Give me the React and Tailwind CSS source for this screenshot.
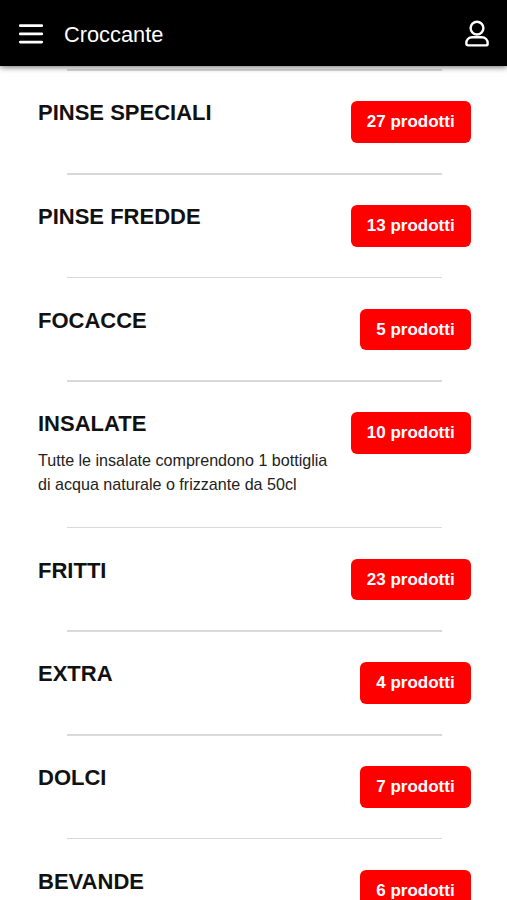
import React from "react";
import clsx from "clsx";

const categories = [
  { name: "PINSE SPECIALI", count: 27 },
  { name: "PINSE FREDDE", count: 13 },
  { name: "FOCACCE", count: 5 },
  {
    name: "INSALATE",
    count: 10,
    description:
      "Tutte le insalate comprendono 1 bottiglia di acqua naturale o frizzante da 50cl",
  },
  { name: "FRITTI", count: 23 },
  { name: "EXTRA", count: 4 },
  { name: "DOLCI", count: 7 },
  { name: "BEVANDE", count: 6 },
];

function MenuIcon() {
  return (
    <svg width="26" height="22" viewBox="0 0 26 22" fill="none">
      <path
        d="M2.3 1.7h21.4M2.3 9.9h21.4M2.3 18.1h21.4"
        stroke="#fff"
        strokeWidth="2.8"
        strokeLinecap="round"
      />
    </svg>
  );
}

function UserIcon() {
  return (
    <svg width="26" height="30" viewBox="0 0 26 30" fill="none">
      <g stroke="#fff" strokeWidth="2.4" strokeLinejoin="round">
        <circle cx="13" cy="8.1" r="6.4" />
        <path d="M8.2 17.2h9.6c3.6 0 5.9 2.6 5.9 6.2 0 1.4-.7 2-2 2H4.3c-1.3 0-2-.6-2-2 0-3.6 2.3-6.2 5.9-6.2z" />
      </g>
    </svg>
  );
}

function Category({ name, count, description }) {
  return (
    <section
      className={clsx(
        "flex flex-col shrink-0",
        description ? "h-[146.2px]" : "h-[103.7px]"
      )}
    >
      <div className="ml-[67px] mr-[65px] h-[1.5px] shrink-0 bg-[#d9d9d9]" />
      <div className="flex items-start justify-between pl-[38px] pr-9 pt-[30.5px]">
        <div className="w-[300px]">
          <h2 className="text-[22px] leading-[23.2px] font-bold text-[#111]">
            {name}
          </h2>
          {description && (
            <p className="mt-[13.6px] text-[16.1px] leading-[23.5px] text-[#222]">
              {description}
            </p>
          )}
        </div>
        <button
          type="button"
          className="h-[41.5px] shrink-0 whitespace-nowrap rounded-[6px] bg-[#ff0000] pl-[16px] pr-[16.4px] text-[17px] font-bold text-white"
        >
          {count} prodotti
        </button>
      </div>
    </section>
  );
}

export default function App() {
  return (
    <div className="flex h-[900px] w-full flex-col overflow-hidden bg-white font-['Liberation_Sans',Arial,sans-serif]">
      <header className="relative z-10 flex h-[66px] shrink-0 items-center bg-black pl-[18px] pr-[17px] pt-[4px] text-white shadow-[0_1px_6px_rgba(0,0,0,0.6)]">
        <MenuIcon />
        <span className="ml-5 grow text-[21.8px]">Croccante</span>
        <UserIcon />
      </header>
      <main className="flex min-h-0 grow flex-col pt-[3.4px]">
        {categories.map((category) => (
          <Category key={category.name} {...category} />
        ))}
      </main>
    </div>
  );
}
